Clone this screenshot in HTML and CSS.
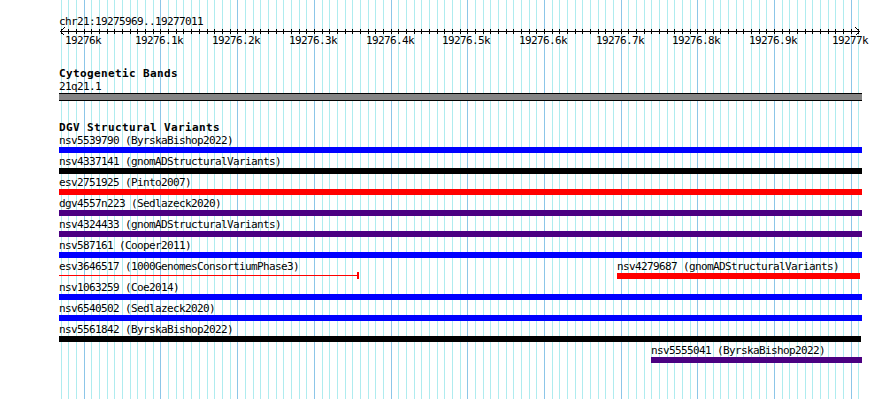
FILE: index.html
```html
<!DOCTYPE html>
<html lang="en">
<head>
  <meta charset="UTF-8">
  <title>chr21:19275969..19277011</title>
  <link rel="stylesheet" href="styles.css">
</head>
<body>
  <div class="panel">
    <!-- grid lines are drawn by the script below -->
    <svg class="grid" id="grid" width="890" height="399"></svg>

    <div class="track ruler-track">
      <div class="track-label">chr21:19275969..19277011</div>
      <svg class="ruler" id="ruler" width="890" height="6"></svg>
      <div class="ruler-labels" id="rulerLabels"></div>
    </div>

    <div class="track cyto-track">
      <div class="track-title">Cytogenetic Bands</div>
      <div class="cyto-row">
        <div class="track-label">21q21.1</div>
        <div class="band"></div>
      </div>
    </div>

    <div class="track dgv-track">
      <div class="track-title">DGV Structural Variants</div>

      <div class="row">
        <div class="feature" style="left:59px;width:803px">
          <div class="feature-label">nsv5539790 (ByrskaBishop2022)</div>
          <div class="glyph blue"></div>
        </div>
      </div>

      <div class="row">
        <div class="feature" style="left:59px;width:803px">
          <div class="feature-label">nsv4337141 (gnomADStructuralVariants)</div>
          <div class="glyph black"></div>
        </div>
      </div>

      <div class="row">
        <div class="feature" style="left:59px;width:803px">
          <div class="feature-label">esv2751925 (Pinto2007)</div>
          <div class="glyph red"></div>
        </div>
      </div>

      <div class="row">
        <div class="feature" style="left:59px;width:803px">
          <div class="feature-label">dgv4557n223 (Sedlazeck2020)</div>
          <div class="glyph indigo"></div>
        </div>
      </div>

      <div class="row">
        <div class="feature" style="left:59px;width:803px">
          <div class="feature-label">nsv4324433 (gnomADStructuralVariants)</div>
          <div class="glyph indigo"></div>
        </div>
      </div>

      <div class="row">
        <div class="feature" style="left:59px;width:803px">
          <div class="feature-label">nsv587161 (Cooper2011)</div>
          <div class="glyph blue"></div>
        </div>
      </div>

      <div class="row">
        <div class="feature" style="left:59px;width:300px">
          <div class="feature-label">esv3646517 (1000GenomesConsortiumPhase3)</div>
          <div class="glyph thin red"></div>
        </div>
        <div class="feature" style="left:617px;width:243px">
          <div class="feature-label">nsv4279687 (gnomADStructuralVariants)</div>
          <div class="glyph red"></div>
        </div>
      </div>

      <div class="row">
        <div class="feature" style="left:59px;width:803px">
          <div class="feature-label">nsv1063259 (Coe2014)</div>
          <div class="glyph blue"></div>
        </div>
      </div>

      <div class="row">
        <div class="feature" style="left:59px;width:803px">
          <div class="feature-label">nsv6540502 (Sedlazeck2020)</div>
          <div class="glyph blue"></div>
        </div>
      </div>

      <div class="row">
        <div class="feature" style="left:59px;width:802px">
          <div class="feature-label">nsv5561842 (ByrskaBishop2022)</div>
          <div class="glyph black"></div>
        </div>
      </div>

      <div class="row">
        <div class="feature" style="left:651px;width:211px">
          <div class="feature-label">nsv5555041 (ByrskaBishop2022)</div>
          <div class="glyph indigo"></div>
        </div>
      </div>
    </div>
  </div>

  <script>
    var SVG_NS = 'http://www.w3.org/2000/svg';
    var viewStart = 19275969;
    var viewEnd = 19277011;
    var padLeft = 60;
    var plotWidth = 800;
    var scale = plotWidth / (viewEnd - viewStart + 1);

    function bpToPx(bp) {
      return Math.round(padLeft + (bp - viewStart) * scale);
    }

    function line(svg, x1, y1, x2, y2, cls) {
      var el = document.createElementNS(SVG_NS, 'line');
      el.setAttribute('x1', x1);
      el.setAttribute('y1', y1);
      el.setAttribute('x2', x2);
      el.setAttribute('y2', y2);
      el.setAttribute('class', cls);
      svg.appendChild(el);
    }

    var grid = document.getElementById('grid');
    var ruler = document.getElementById('ruler');
    var labels = document.getElementById('rulerLabels');

    // ruler backbone with arrow heads on both ends
    line(ruler, 60, 3.5, 860, 3.5, 'axis');
    line(ruler, 60.5, 3.5, 64.5, -0.5, 'axis');
    line(ruler, 60.5, 3.5, 64.5, 7.5, 'axis');
    line(ruler, 859.5, 3.5, 855.5, -0.5, 'axis');
    line(ruler, 859.5, 3.5, 855.5, 7.5, 'axis');

    for (var bp = 19275970; bp <= 19277010; bp += 10) {
      var x = bpToPx(bp) + 0.5;
      var major = bp % 100 === 0;
      line(grid, x, 0, x, 399, major ? 'major' : 'minor');
      line(ruler, x, 1, x, 6, 'axis');

      if (major) {
        var label = document.createElement('div');
        label.className = 'tick-label';
        label.style.left = (bpToPx(bp) - 1) + 'px';
        label.textContent = (bp / 1000) + 'k';
        labels.appendChild(label);
      }
    }
  </script>
</body>
</html>
```

FILE: styles.css
```css
* {
  box-sizing: border-box;
  margin: 0;
  padding: 0;
}

body {
  background: #ffffff;
  color: #000000;
  font-family: "DejaVu Sans Mono", "Liberation Mono", monospace;
  font-size: 11px;
  letter-spacing: -0.62px;
  width: 890px;
  height: 399px;
  overflow: hidden;
}

.panel {
  position: relative;
  width: 890px;
  height: 399px;
  overflow: hidden;
}

/* Grid */
.grid {
  position: absolute;
  top: 0;
  left: 0;
  shape-rendering: crispEdges;
}

.grid .minor {
  stroke: #afecef;
  stroke-width: 1;
}

.grid .major {
  stroke: #8cc6e8;
  stroke-width: 1;
}

/* Tracks */
.track {
  position: relative;
}

.track-label {
  padding-left: 59px;
  line-height: 13px;
  white-space: nowrap;
}

.track-title {
  padding-left: 59px;
  line-height: 13px;
  font-weight: bold;
  letter-spacing: 0.38px;
  white-space: nowrap;
}

/* Ruler */
.ruler-track {
  padding-top: 15px;
}

.ruler {
  display: block;
  overflow: visible;
  shape-rendering: crispEdges;
}

.ruler .axis {
  stroke: #000000;
  stroke-width: 1;
}

.ruler-labels {
  position: relative;
  height: 13px;
}

.tick-label {
  position: absolute;
  top: 0;
  line-height: 13px;
  white-space: nowrap;
  transform: translateX(-50%);
}

/* Cytogenetic bands */
.cyto-track {
  margin-top: 20px;
}

.cyto-row {
  margin-top: 1px;
}

.cyto-row .track-label {
  line-height: 12px;
}

.band {
  margin-left: 59px;
  width: 803px;
  height: 8px;
  background: #858585;
  border-top: 1px solid #000000;
  border-bottom: 1px solid #000000;
}

/* DGV */
.dgv-track {
  margin-top: 20px;
}

.row {
  position: relative;
  height: 21px;
}

.feature {
  position: absolute;
  top: 0;
}

.feature-label {
  line-height: 13px;
  white-space: nowrap;
}

.glyph {
  position: relative;
  height: 6px;
}

.glyph.blue { background: #0000ff; }
.glyph.black { background: #000000; }
.glyph.red { background: #ff0000; }
.glyph.indigo { background: #4b0082; }

.glyph.thin {
  background: transparent;
}

.glyph.thin::before {
  content: "";
  position: absolute;
  left: 0;
  right: 0;
  top: 2px;
  height: 1px;
  background: #ff0000;
}

.glyph.thin::after {
  content: "";
  position: absolute;
  right: 0;
  top: -1px;
  width: 2px;
  height: 7px;
  background: #ff0000;
}
```
